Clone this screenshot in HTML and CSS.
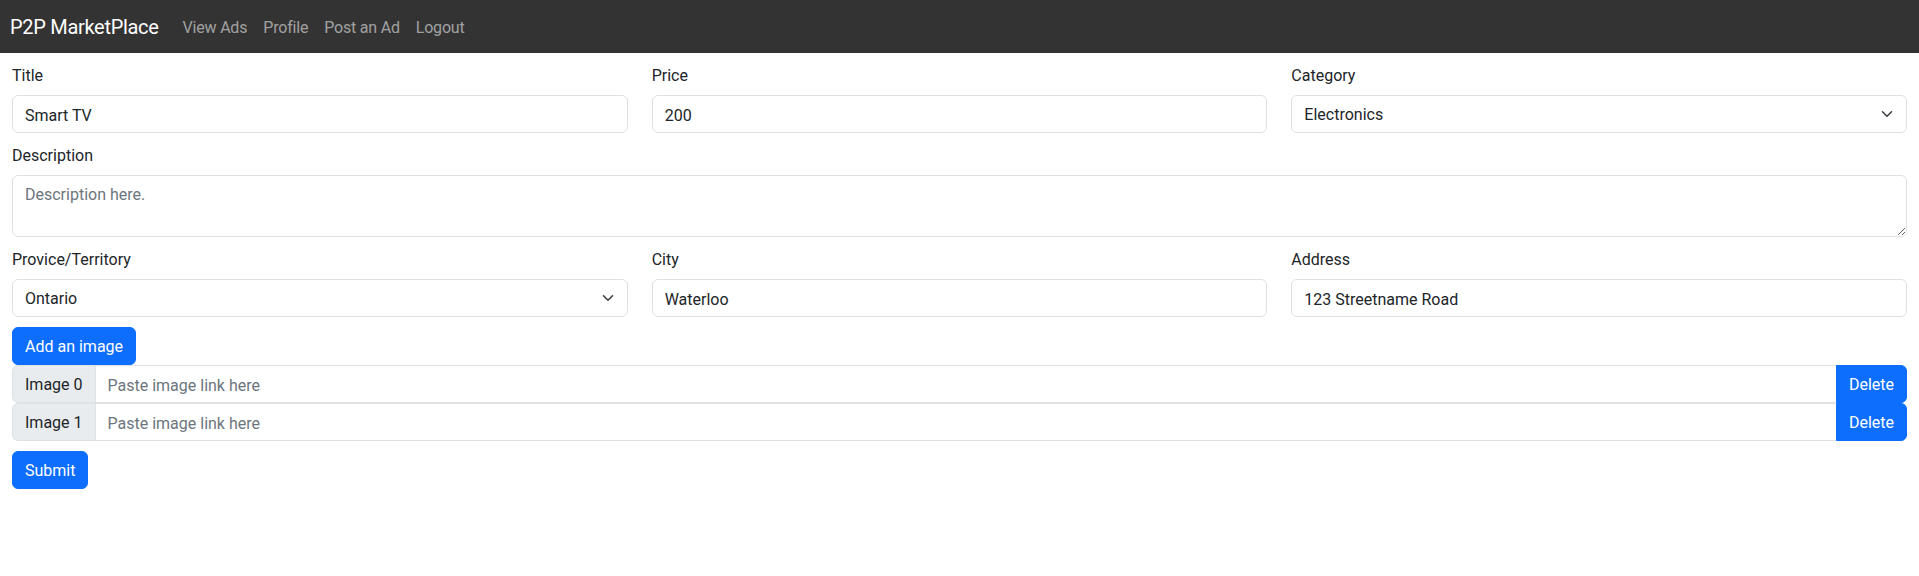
FILE: index.html
```html
<!DOCTYPE html>
<html lang="en">
<head>
<meta charset="utf-8">
<title>P2P MarketPlace - Post an Ad</title>
<link rel="stylesheet" href="styles.css">
</head>
<body>
<nav class="navbar">
  <a class="brand" href="#">P2P MarketPlace</a>
  <ul class="nav-links">
    <li><a href="#">View Ads</a></li>
    <li><a href="#">Profile</a></li>
    <li><a href="#">Post an Ad</a></li>
    <li><a href="#">Logout</a></li>
  </ul>
</nav>
<form class="ad-form">
  <div class="row-3">
    <div class="field">
      <label class="form-label">Title</label>
      <input class="form-control" type="text" value="Smart TV">
    </div>
    <div class="field">
      <label class="form-label">Price</label>
      <input class="form-control" type="text" value="200">
    </div>
    <div class="field">
      <label class="form-label">Category</label>
      <div class="select-wrap">
        <select class="form-control form-select"><option>Electronics</option></select>
        <svg class="chevron" width="16" height="12" viewBox="0 0 16 16"><path d="m2 5 6 6 6-6" fill="none" stroke="#343a40" stroke-width="2" stroke-linecap="round" stroke-linejoin="round"/></svg>
      </div>
    </div>
  </div>
  <div class="field">
    <label class="form-label">Description</label>
    <textarea class="form-control textarea" rows="2" placeholder="Description here."></textarea>
  </div>
  <div class="row-3">
    <div class="field">
      <label class="form-label">Provice/Territory</label>
      <div class="select-wrap">
        <select class="form-control form-select"><option>Ontario</option></select>
        <svg class="chevron" width="16" height="12" viewBox="0 0 16 16"><path d="m2 5 6 6 6-6" fill="none" stroke="#343a40" stroke-width="2" stroke-linecap="round" stroke-linejoin="round"/></svg>
      </div>
    </div>
    <div class="field">
      <label class="form-label">City</label>
      <input class="form-control" type="text" value="Waterloo">
    </div>
    <div class="field">
      <label class="form-label">Address</label>
      <input class="form-control" type="text" value="123 Streetname Road">
    </div>
  </div>
  <div class="images">
    <div><button type="button" class="btn">Add an image</button></div>
    <div class="input-group">
      <span class="group-text">Image 0</span>
      <input class="form-control group-input" type="text" placeholder="Paste image link here">
      <button type="button" class="btn btn-delete">Delete</button>
    </div>
    <div class="input-group">
      <span class="group-text">Image 1</span>
      <input class="form-control group-input" type="text" placeholder="Paste image link here">
      <button type="button" class="btn btn-delete">Delete</button>
    </div>
  </div>
  <div><button type="submit" class="btn">Submit</button></div>
</form>
</body>
</html>
```
FILE: styles.css
```css
* { box-sizing: border-box; }
html, body { margin: 0; padding: 0; }
body {
  font-family: Roboto, "Noto Sans", sans-serif;
  font-size: 16px;
  line-height: 1.5;
  color: #212529;
  background: #fff;
}
.navbar {
  height: 53px;
  background: #333333;
  display: flex;
  align-items: center;
  padding: 0 10px;
}
.brand {
  color: #fff;
  font-size: 20px;
  letter-spacing: -0.3px;
  text-decoration: none;
  margin-right: 16px;
  line-height: 30px;
  padding-top: 1px;
}
.nav-links {
  list-style: none;
  margin: 0;
  padding: 0;
  display: flex;
}
.nav-links a {
  display: block;
  padding: 9px 8px 7px;
  color: rgba(255,255,255,0.55);
  letter-spacing: -0.2px;
  text-decoration: none;
}
.ad-form {
  padding: 10px 12px 0;
  display: flex;
  flex-direction: column;
  gap: 10px;
}
.row-3 {
  display: grid;
  grid-template-columns: 1fr 1fr 1fr;
  column-gap: 24px;
}
.field { display: flex; flex-direction: column; }
.form-label {
  display: block;
  padding-top: 1px;
  margin-bottom: 7px;
  line-height: 24px;
}
.form-control {
  display: block;
  width: 100%;
  height: 38px;
  padding: 7px 12px 5px;
  font: inherit;
  font-size: 16px;
  line-height: 24px;
  color: #212529;
  background: #fff;
  border: 1px solid #dee2e6;
  border-radius: 6px;
  outline: none;
}
.form-control::placeholder { color: #6c757d; opacity: 1; }
.textarea {
  height: 62px;
  resize: vertical;
}
.select-wrap { position: relative; }
.form-select {
  appearance: none;
  -webkit-appearance: none;
  padding-right: 36px;
}
.chevron {
  position: absolute;
  right: 12px;
  top: 13px;
  pointer-events: none;
}
.images { display: flex; flex-direction: column; }
.btn {
  display: inline-block;
  height: 38px;
  padding: 7px 12px 5px;
  font: inherit;
  font-size: 16px;
  line-height: 24px;
  color: #fff;
  background: #0d6efd;
  border: 1px solid #0d6efd;
  border-radius: 6px;
  cursor: pointer;
}
.input-group {
  display: flex;
  align-items: stretch;
}
.group-text {
  display: flex;
  align-items: center;
  padding: 2px 12px 0;
  background: #e9ecef;
  border: 1px solid #dee2e6;
  border-radius: 6px 0 0 6px;
  white-space: nowrap;
}
.group-input {
  flex: 1;
  border-radius: 0;
  margin-left: -1px;
}
.btn-delete {
  border-radius: 0 6px 6px 0;
  margin-left: -1px;
}
```
